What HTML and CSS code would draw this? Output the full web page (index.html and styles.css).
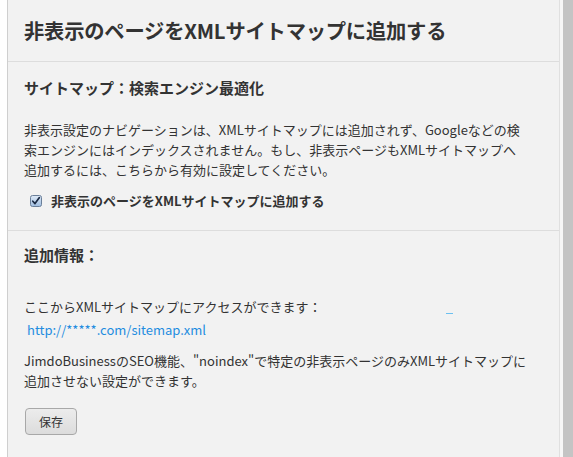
FILE: index.html
```html
<!DOCTYPE html>
<html lang="ja">
<head>
<meta charset="utf-8">
<link rel="stylesheet" href="styles.css">
</head>
<body>
<div class="frame">
  <div class="panel">
    <div class="header">
      <h1 class="title">非表示のページをXMLサイトマップに追加する</h1>
    </div>
    <div class="section first">
      <h2 class="subtitle">サイトマップ：検索エンジン最適化</h2>
      <p class="text">非表示設定のナビゲーションは、XMLサイトマップには追加されず、Googleなどの検<br>索エンジンにはインデックスされません。もし、非表示ページもXMLサイトマップへ<br>追加するには、こちらから有効に設定してください。</p>
      <label class="check-row">
        <svg class="check" width="12" height="12" viewBox="0 0 12 12">
          <defs>
            <linearGradient id="g" x1="0" y1="0" x2="0" y2="1">
              <stop offset="0" stop-color="#dfeaf7"/>
              <stop offset="1" stop-color="#9fbde0"/>
            </linearGradient>
          </defs>
          <rect x="0.5" y="0.5" width="11" height="11" rx="2" fill="url(#g)" stroke="#6a7f99"/>
          <path d="M2.8 6.2 L5 8.6 L9.4 2.6" fill="none" stroke="#1b2a44" stroke-width="1.7" stroke-linecap="round" stroke-linejoin="round"/>
        </svg>
        <span class="check-label">非表示のページをXMLサイトマップに追加する</span>
      </label>
    </div>
    <div class="section second">
      <h2 class="subtitle">追加情報：</h2>
      <p class="text access">ここからXMLサイトマップにアクセスができます：<span class="mark"></span></p>
      <a class="link" href="#">http://*****.com/sitemap.xml</a>
      <p class="text note">JimdoBusinessのSEO機能、"noindex"で特定の非表示ページのみXMLサイトマップに<br>追加させない設定ができます。</p>
      <button class="save" type="button">保存</button>
    </div>
  </div>
  <div class="gap"></div>
  <div class="scrollbar"></div>
</div>
</body>
</html>
```
FILE: styles.css
```css
html, body {
  margin: 0;
  padding: 0;
  background: #ffffff;
}
body {
  font-family: "Noto Sans CJK JP", "Noto Sans", sans-serif;
  color: #333333;
}
.frame {
  display: flex;
  height: 457px;
  padding-left: 7px;
  overflow: hidden;
}
.panel {
  width: 551px;
  background: #f2f2f2;
  border-left: 1px solid #cfcfcf;
  border-right: 1px solid #e0e0e0;
}
.gap {
  width: 3px;
  background: #f7f7f7;
}
.scrollbar {
  width: 10px;
  background: #c4c4c4;
}
.header {
  height: 45px;
  padding: 16px 0 0 16px;
  border-bottom: 1px solid #dddddd;
}
.title {
  margin: 0;
  font-size: 20.3px;
  line-height: 28px;
  font-weight: bold;
  color: #333333;
  letter-spacing: -0.2px;
}
.section {
  padding-left: 16px;
}
.section.first {
  padding-top: 15px;
  padding-bottom: 19px;
  border-bottom: 1px solid #dddddd;
}
.section.second {
  padding-top: 13px;
}
.subtitle {
  margin: 0;
  font-size: 15px;
  line-height: 22px;
  font-weight: bold;
  color: #333333;
}
.text {
  margin: 0;
  font-size: 13px;
  line-height: 20px;
  color: #333333;
}
.first .text {
  margin-top: 21px;
}
.check-row {
  display: flex;
  align-items: center;
  margin-top: 11px;
  height: 20px;
  padding-left: 6px;
}
.check {
  display: block;
  margin-right: 9px;
}
.check-label {
  font-size: 13px;
  font-weight: bold;
  line-height: 20px;
}
.access {
  margin-top: 31px;
  position: relative;
}
.mark {
  position: absolute;
  left: 422px;
  top: 16px;
  width: 7px;
  height: 1px;
  background: #6cc0f0;
}
.link {
  display: block;
  margin-top: 3px;
  padding-left: 3px;
  font-size: 13px;
  line-height: 20px;
  color: #1f8de0;
  text-decoration: none;
}
.note {
  margin-top: 11px;
}
.save {
  display: block;
  margin-top: 17px;
  margin-left: 1px;
  width: 52px;
  height: 27px;
  padding: 0;
  border: 1px solid #a8a8a8;
  border-radius: 4px;
  background: linear-gradient(#ececec, #dcdcdc);
  font-family: "Noto Sans CJK JP", sans-serif;
  font-size: 12px;
  color: #333333;
}
```
